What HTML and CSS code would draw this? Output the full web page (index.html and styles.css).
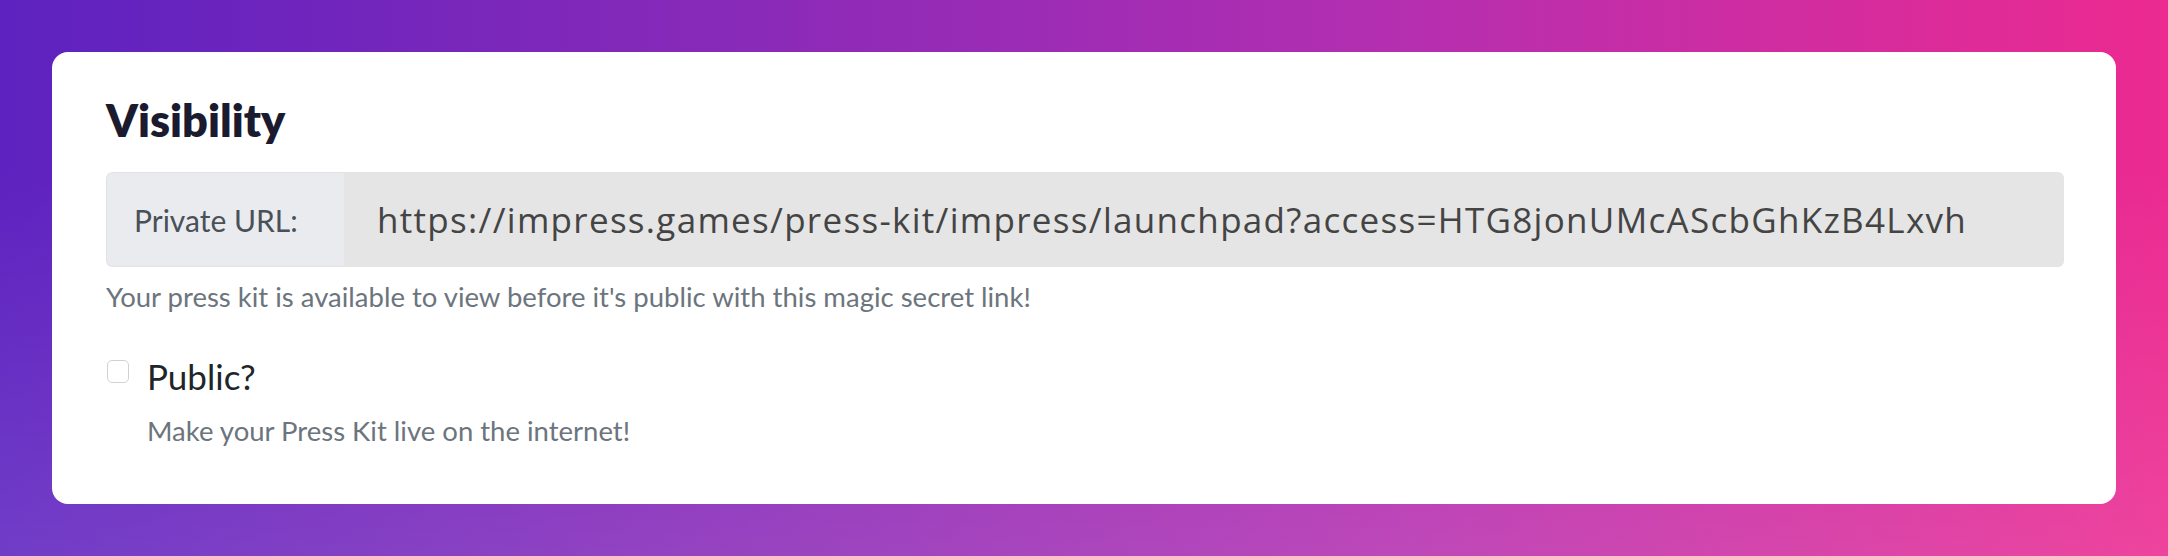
FILE: index.html
```html
<!DOCTYPE html>
<html lang="en">
<head>
    <meta charset="UTF-8">
    <meta name="viewport" content="width=device-width, initial-scale=1.0">
    <title>Visibility</title>
    <link rel="stylesheet" href="styles.css">
</head>
<body>
    <div class="page">
        <div class="card">
            <h2 class="card-title">Visibility</h2>
            <div class="input-group">
                <span class="input-label">Private URL:</span>
                <input class="input-url" type="text" readonly value="https://impress.games/press-kit/impress/launchpad?access=HTG8jonUMcAScbGhKzB4Lxvh">
            </div>
            <p class="help">Your press kit is available to view before it's public with this magic secret link!</p>
            <div class="check">
                <input class="check-box" type="checkbox" id="public">
                <div>
                    <label class="check-label" for="public">Public?</label>
                    <p class="help check-help">Make your Press Kit live on the internet!</p>
                </div>
            </div>
        </div>
    </div>
</body>
</html>
```
FILE: styles.css
```css
body {
    margin: 0;
    font-family: Lato, "Noto Sans", sans-serif;
}
.page {
    min-height: 556px;
    box-sizing: border-box;
    padding: 52px;
    background:
        linear-gradient(to bottom, rgba(255, 255, 255, 0) 30%, rgba(255, 255, 255, 0.12) 100%),
        linear-gradient(to right, #5d22c0 0%, #8a2ab8 35%, #b52fb0 65%, #ec2a90 100%);
}
.card {
    background: #ffffff;
    border-radius: 16px;
    padding: 41px 52px 52px 54px;
}
.card-title {
    margin: 0 0 25px;
    font-size: 45px;
    font-weight: 800;
    line-height: 1.2;
    color: #1b1b2f;
}
.input-group {
    display: flex;
    height: 95px;
    border-radius: 6px;
    overflow: hidden;
}
.input-label {
    display: flex;
    align-items: center;
    width: 238px;
    box-sizing: border-box;
    padding-left: 27px;
    background: #e9ebef;
    color: #495057;
    font-size: 30px;
    border: 1px solid #e0e2e6;
    border-right: none;
    border-radius: 6px 0 0 6px;
}
.input-url {
    flex: 1;
    border: none;
    margin: 0;
    padding: 0 0 0 33px;
    background: #e5e5e5;
    color: #444444;
    font-family: "Open Sans", sans-serif;
    font-size: 35px;
    letter-spacing: 1.3px;
    outline: none;
}
.help {
    margin: 9px 0 0;
    font-size: 27.5px;
    line-height: 1.5;
    color: #6c757d;
}
.check {
    display: flex;
    gap: 18px;
    margin-top: 38px;
}
.check-box {
    appearance: none;
    -webkit-appearance: none;
    width: 22px;
    height: 23px;
    margin: 5px 0 0 1px;
    border: 1px solid #cfd2d6;
    border-radius: 5px;
    background: #ffffff;
}
.check-label {
    display: block;
    font-size: 35px;
    line-height: 1.2;
    color: #212529;
}
.check-help {
    margin-top: 13px;
}
```
